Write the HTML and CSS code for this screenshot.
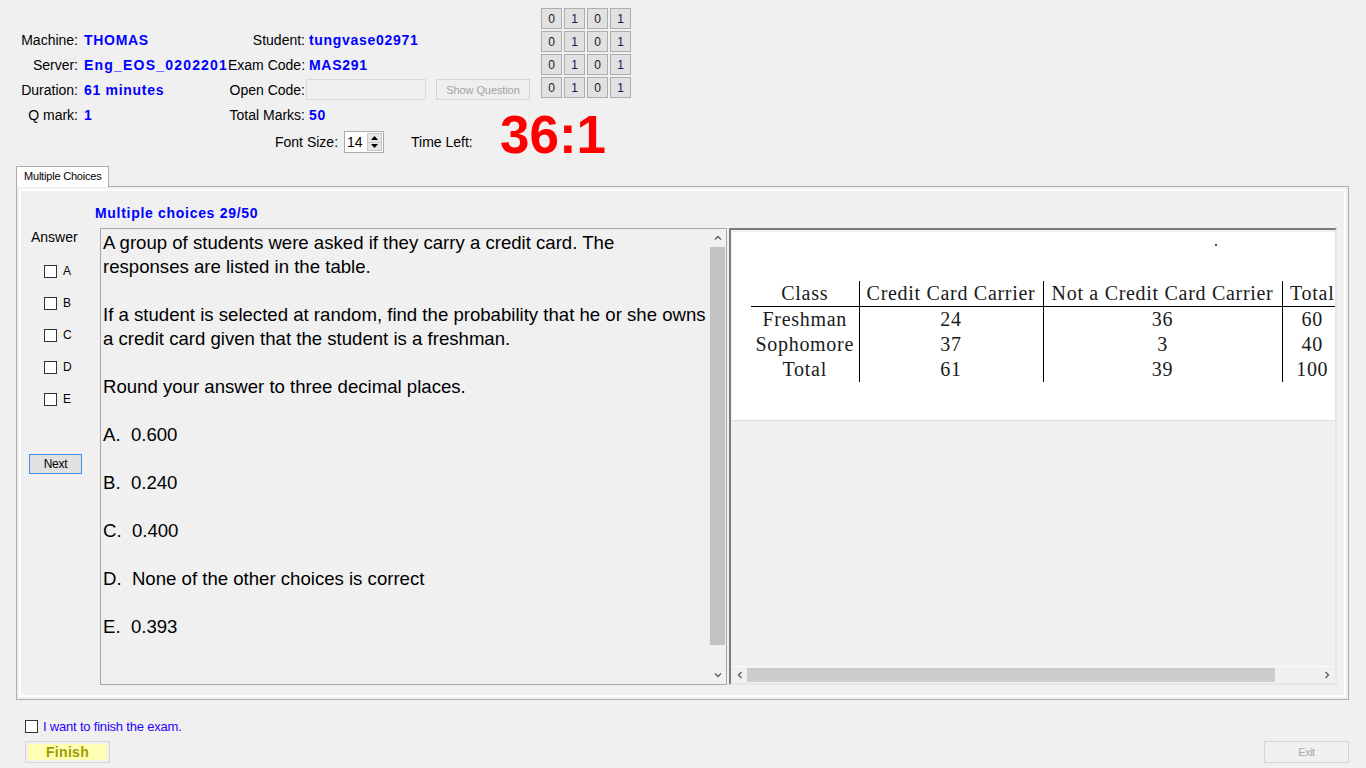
FILE: index.html
```html
<!DOCTYPE html>
<html>
<head>
<meta charset="utf-8">
<title>Exam</title>
<link rel="stylesheet" href="styles.css">
</head>
<body>
<div class="app">
  <header class="header">
    <div class="top">
      <div class="info">
        <div class="lbl">Machine:</div><div class="val v1">THOMAS</div>
        <div class="lbl lbl2">Student:</div><div class="val v2">tungvase02971</div>
        <div class="lbl">Server:</div><div class="val v1 clip">Eng_EOS_02022013</div>
        <div class="lbl lbl2">Exam Code:</div><div class="val v2">MAS291</div>
        <div class="lbl">Duration:</div><div class="val v1">61 minutes</div>
        <div class="lbl lbl2">Open Code:</div>
        <div class="opencell"><div class="textbox"></div><div class="btn showq">Show Question</div></div>
        <div class="lbl">Q mark:</div><div class="val v1">1</div>
        <div class="lbl lbl2">Total Marks:</div><div class="val v2">50</div>
      </div>
      <div class="bits">
        <div class="bit">0</div><div class="bit one">1</div><div class="bit">0</div><div class="bit one">1</div>
        <div class="bit">0</div><div class="bit one">1</div><div class="bit">0</div><div class="bit one">1</div>
        <div class="bit">0</div><div class="bit one">1</div><div class="bit">0</div><div class="bit one">1</div>
        <div class="bit">0</div><div class="bit one">1</div><div class="bit">0</div><div class="bit one">1</div>
      </div>
    </div>
    <div class="controls">
      <div class="fs-label">Font Size:</div>
      <div class="spinner">
        <span class="spin-val">14</span>
        <div class="spin-btns">
          <div class="spin-btn"><svg width="7" height="4" viewBox="0 0 7 4"><path d="M0 4 L3.5 0 L7 4 Z" fill="#000"/></svg></div>
          <div class="spin-btn"><svg width="7" height="4" viewBox="0 0 7 4"><path d="M0 0 L3.5 4 L7 0 Z" fill="#000"/></svg></div>
        </div>
      </div>
      <div class="tl-label">Time Left:</div>
      <div class="timer">36:1</div>
    </div>
  </header>

  <div class="tabs"><div class="tab">Multiple Choices</div></div>

  <section class="panel">
    <div class="qtitle">Multiple choices 29/50</div>
    <div class="work">
      <aside class="answers">
        <div class="ans-title">Answer</div>
        <div class="opts">
          <label class="opt"><span class="cb"></span><span class="opt-l">A</span></label>
          <label class="opt"><span class="cb"></span><span class="opt-l">B</span></label>
          <label class="opt"><span class="cb"></span><span class="opt-l">C</span></label>
          <label class="opt"><span class="cb"></span><span class="opt-l">D</span></label>
          <label class="opt"><span class="cb"></span><span class="opt-l">E</span></label>
        </div>
        <div class="btn next">Next</div>
      </aside>

      <div class="question">
        <div class="qtext">
          <p>A group of students were asked if they carry a credit card. The<br>responses are listed in the table.</p>
          <p>If a student is selected at random, find the probability that he or she owns<br>a credit card given that the student is a freshman.</p>
          <p>Round your answer to three decimal places.</p>
          <p>A.&nbsp; 0.600</p>
          <p>B.&nbsp; 0.240</p>
          <p>C.&nbsp; 0.400</p>
          <p>D.&nbsp; None of the other choices is correct</p>
          <p>E.&nbsp; 0.393</p>
        </div>
        <div class="vscroll">
          <div class="sarrow"><svg width="8" height="5" viewBox="0 0 8 5"><path d="M1 4.5 L4 1.5 L7 4.5" fill="none" stroke="#606060" stroke-width="1.4"/></svg></div>
          <div class="vtrack"><div class="vthumb"></div></div>
          <div class="sarrow"><svg width="8" height="5" viewBox="0 0 8 5"><path d="M1 0.5 L4 3.5 L7 0.5" fill="none" stroke="#606060" stroke-width="1.4"/></svg></div>
        </div>
      </div>

      <div class="figure">
        <div class="viewport">
          <div class="image">
            <span class="dot"></span>
            <table class="ctable">
              <tr class="head"><td class="c1 bl">Class</td><td class="c2 bl">Credit Card Carrier</td><td class="c3 bl">Not a Credit Card Carrier</td><td class="c4">Total</td></tr>
              <tr><td class="bl">Freshman</td><td class="bl">24</td><td class="bl">36</td><td>60</td></tr>
              <tr><td class="bl">Sophomore</td><td class="bl">37</td><td class="bl">3</td><td>40</td></tr>
              <tr><td class="bl">Total</td><td class="bl">61</td><td class="bl">39</td><td>100</td></tr>
            </table>
          </div>
        </div>
        <div class="hscroll">
          <div class="harrow"><svg width="5" height="8" viewBox="0 0 5 8"><path d="M4.5 1 L1.5 4 L4.5 7" fill="none" stroke="#606060" stroke-width="1.4"/></svg></div>
          <div class="htrack"><div class="hthumb"></div></div>
          <div class="harrow"><svg width="5" height="8" viewBox="0 0 5 8"><path d="M0.5 1 L3.5 4 L0.5 7" fill="none" stroke="#606060" stroke-width="1.4"/></svg></div>
        </div>
      </div>
    </div>
  </section>

  <footer class="footer">
    <label class="finish-check"><span class="cb"></span><span class="finish-text">I want to finish the exam.</span></label>
    <div class="footer-btns">
      <div class="btn finish"><span>Finish</span></div>
      <div class="btn exit">Exit</div>
    </div>
  </footer>
</div>
</body>
</html>
```

FILE: styles.css
```css
* { box-sizing: border-box; }
html, body { margin: 0; padding: 0; }
body {
  background: #f0f0f0;
  font-family: "Liberation Sans", Arial, sans-serif;
  font-size: 14px;
  color: #000;
  width: 1366px;
  height: 768px;
  overflow: hidden;
}
.app { width: 1366px; height: 768px; }

/* header */
.header { padding-top: 8px; }
.top { display: flex; align-items: flex-start; }
.info {
  margin-top: 19px;
  display: grid;
  grid-template-columns: 82px 146px 78px 224px;
  grid-auto-rows: 25px;
  align-items: center;
}
.lbl { text-align: right; padding-right: 4px; white-space: nowrap; }
.lbl2 { padding-right: 1px; }
.val { color: #0000ff; font-weight: bold; letter-spacing: 0.7px; white-space: nowrap; }
.v1 { padding-left: 2px; }
.v2 { padding-left: 3px; }
.clip { overflow: hidden; letter-spacing: 1.2px; }
.opencell { display: flex; align-items: center; }
.textbox {
  width: 120px; height: 21px;
  border: 1px solid #dadada;
  background: #f0f0f0;
}
.btn {
  display: flex; align-items: center; justify-content: center;
  border: 1px solid #adadad;
  background: #e1e1e1;
  font-size: 12px;
  white-space: nowrap;
}
.showq {
  margin-left: 10px;
  width: 94px; height: 21px;
  border-color: #d4d4d4;
  background: #efefef;
  color: #a3a3a3;
  font-size: 11px;
  letter-spacing: -0.1px;
}
.bits {
  margin-left: 11px;
  display: grid;
  grid-template-columns: repeat(4, 21px);
  grid-auto-rows: 21px;
  gap: 2px;
}
.bit {
  display: flex; align-items: center; justify-content: center;
  border: 1px solid #adadad;
  background: #e1e1e1;
  font-size: 12px;
  color: #1a1a1a;
}
.bit.one { color: #1c1054; }

.controls {
  margin-top: 1px;
  height: 28px;
  display: flex;
  align-items: center;
  padding-left: 275px;
}
.fs-label { width: 62px; white-space: nowrap; }
.spinner {
  margin-left: 7px;
  width: 40px; height: 22px;
  border: 1px solid #ababab;
  background: #fff;
  display: flex;
  align-items: center;
}
.spin-val { padding-left: 2px; width: 22px; font-size: 14px; }
.spin-btns {
  width: 15px; height: 18px;
  display: flex; flex-direction: column;
}
.spin-btn {
  flex: 1;
  display: flex; align-items: center; justify-content: center;
  background: #e6e6e6;
  border: 1px solid #c8c8c8;
}
.spin-btn + .spin-btn { border-top: none; }
.tl-label { margin-left: 27px; width: 62px; white-space: nowrap; }
.timer {
  margin-left: 27px;
  margin-bottom: 14px;
  height: 28px;
  line-height: 28px;
  font-size: 53px;
  font-weight: bold;
  color: #ff0000;
  white-space: nowrap;
}

/* tabs */
.tabs { margin-top: 10px; padding-left: 16px; display: flex; }
.tab {
  position: relative;
  z-index: 1;
  width: 93px; height: 21px;
  margin-bottom: -1px;
  border: 1px solid #acacac;
  border-bottom: none;
  background: #fff;
  font-size: 11px;
  letter-spacing: -0.2px;
  padding: 3px 0 0 7px;
  white-space: nowrap;
}
.panel {
  margin: 0 17px 0 16px;
  height: 514px;
  border: 1px solid #adadad;
  background: #f0f0f0;
  box-shadow: inset 0 0 0 2px #f0f0f0, inset 0 0 0 4px #fff;
  padding: 18px 0 0 0;
}
.qtitle {
  padding-left: 78px;
  height: 16px;
  line-height: 16px;
  color: #0000ff;
  font-weight: bold;
  letter-spacing: 0.7px;
}
.work {
  margin-top: 7px;
  height: 457px;
  display: flex;
}

/* answers column */
.answers { width: 83px; flex: none; }
.ans-title { margin-top: 1px; padding-left: 14px; height: 16px; line-height: 16px; }
.opts { margin-top: 10px; }
.opt {
  height: 32px;
  display: flex; align-items: center;
  padding-left: 27px;
}
.cb {
  width: 13px; height: 13px;
  border: 1px solid #333;
  background: #fff;
  flex: none;
}
.opt-l { margin-left: 6px; font-size: 12px; }
.next {
  margin: 39px 0 0 12px;
  width: 53px; height: 20px;
  border-color: #3d8ee6;
  background: #e1e1e1;
  font-size: 12px;
  letter-spacing: -0.3px;
}

/* question */
.question {
  width: 627px; flex: none;
  height: 457px;
  border: 1px solid #a8a8a8;
  background: #f0f0f0;
  display: flex;
}
.qtext {
  flex: 1;
  padding: 2px 0 0 2px;
  font-size: 18.6px;
  line-height: 24px;
  white-space: nowrap;
  overflow: hidden;
}
.qtext p { margin: 0 0 24px 0; }
.vscroll {
  width: 17px; flex: none;
  display: flex; flex-direction: column;
  background: #f0f0f0;
}
.sarrow { height: 17px; display: flex; align-items: center; justify-content: center; }
.vtrack { flex: 1; padding: 1px 1px 0 1px; }
.vthumb { height: 398px; background: #c2c2c2; }

/* figure */
.figure {
  margin-left: 2px;
  width: 608px; flex: none;
  height: 457px;
  border-style: solid;
  border-width: 2px;
  border-color: #7b7b7b #e6e6e6 #e6e6e6 #7b7b7b;
  display: flex; flex-direction: column;
  background: #f0f0f0;
}
.viewport { flex: 1; overflow: hidden; padding: 2px 0 0 1px; }
.image {
  position: relative;
  height: 189px;
  background: #fff;
  border-bottom: 1px solid #dcdcdc;
  overflow: hidden;
  padding: 49px 0 0 19px;
}
.dot {
  position: absolute;
  left: 483px; top: 12px;
  width: 2px; height: 2px;
  background: #555;
}
.ctable {
  border-collapse: collapse;
  table-layout: fixed;
  width: 591px;
  font-family: "Liberation Serif", "Times New Roman", serif;
  font-size: 20px;
  letter-spacing: 0.7px;
  color: #1a1a1a;
}
.ctable td {
  padding: 0;
  height: 25px;
  line-height: 25px;
  text-align: center;
  white-space: nowrap;
}
.ctable td.bl { border-right: 1px solid #000; }
.ctable tr.head td { border-bottom: 1px solid #000; }
.c1 { width: 108px; }
.c2 { width: 184px; }
.c3 { width: 239px; }
.c4 { width: 60px; }
.hscroll {
  height: 17px; flex: none;
  display: flex;
  background: #f0f0f0;
  border-top: 1px solid #fafafa;
}
.harrow { width: 16px; display: flex; align-items: center; justify-content: center; }
.htrack { flex: 1; padding-top: 1px; }
.hthumb { width: 528px; height: 14px; background: #cdcdcd; }

/* footer */
.footer { margin-top: 19px; padding-left: 25px; }
.finish-check { height: 14px; display: flex; align-items: center; }
.finish-text {
  margin-left: 5px;
  color: #2a00ff;
  font-size: 13px;
  letter-spacing: -0.2px;
}
.footer-btns {
  margin-top: 8px;
  padding-right: 17px;
  display: flex;
  justify-content: space-between;
}
.finish {
  width: 85px; height: 22px;
  border-color: #d6d6d6;
  background: #f0f0f0;
  padding: 2px;
}
.finish span {
  width: 100%; height: 100%;
  display: flex; align-items: center; justify-content: center;
  background: #ffffb4;
  color: #9c9c00;
  font-weight: bold;
  font-size: 14px;
  letter-spacing: 0.3px;
}
.exit {
  width: 85px; height: 22px;
  border-color: #d4d4d4;
  background: #f0f0f0;
  color: #a8a8a8;
  font-size: 11px;
  letter-spacing: -0.5px;
}
```
